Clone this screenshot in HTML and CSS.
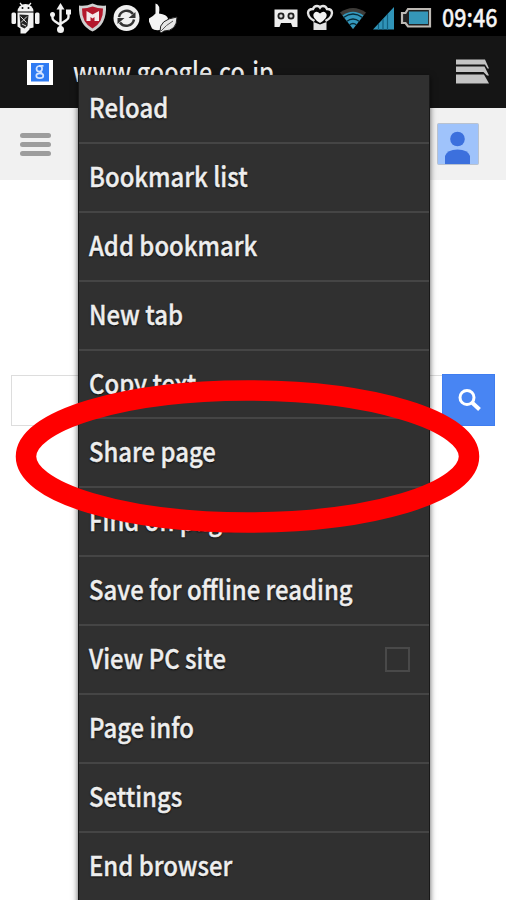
FILE: index.html
```
<!DOCTYPE html>
<html lang="en">
<head>
<meta charset="utf-8">
<title>Browser menu</title>
<link rel="stylesheet" href="styles.css">
</head>
<body>
<div class="phone">
  <header class="status">
    <svg class="status-icons" width="180" height="36" viewBox="0 0 180 36" aria-hidden="true">
      <!-- android -->
      <g fill="#f2f2f2">
        <path d="M17.500 11.500a8 7.500 0 0 1 16 0z"/>
        <path d="M20 3l2.500 3M31 3l-2.500 3" stroke="#f2f2f2" stroke-width="1.200"/>
        <rect x="11.500" y="12.500" width="4.500" height="11.500" rx="1.500"/>
        <rect x="35" y="12.500" width="4.500" height="11.500" rx="1.500"/>
        <path d="M17.500 12.500h16v15l-4 1v1l-4 4h-5v-5l-3-2z"/>
      </g>
      <circle cx="22.500" cy="8" r="1" fill="#111"/><circle cx="28.500" cy="8" r="1" fill="#111"/>
      <path d="M19.500 14.500l9 .5-1 11-3 2.500-4-2z" fill="#222"/>
      <path d="M20.500 16.500l6 6M27 16.500l-6 6M22 24l4 2" stroke="#ddd" stroke-width="1"/>
      <!-- usb -->
      <g fill="none" stroke="#f2f2f2" stroke-width="2.400">
        <path d="M60.500 8v22M52.500 15v3q0 2 2 3l6 4M68.500 13v4q0 2-2 3l-6 4"/>
      </g>
      <g fill="#f2f2f2"><path d="M60.500 3l4 6.500h-8z"/><circle cx="52.500" cy="14.500" r="2.500"/><rect x="66" y="9.500" width="5" height="5"/><circle cx="60.500" cy="29.500" r="3.500"/></g>
      <!-- shield -->
      <path d="M79 5.500Q86 6.500 92.500 3.500Q99 6.500 106 5.500Q107 25 92.500 31.500Q78 25 79 5.500z" fill="#cfcfcf"/>
      <path d="M82 8.500Q87 8.500 92.500 6.500Q98 8.500 103 8.500Q103.500 22.500 92.500 28.500Q81.500 22.500 82 8.500z" fill="#b4182c"/>
      <path d="M86.500 21v-10l6 3.500 6.500-3.500v10h-4.500v-4l-2 1.500-2-1.500v4z" fill="#f4e8ea"/>
      <!-- sync -->
      <circle cx="126.500" cy="18" r="13" fill="#f0f0f0"/>
      <g fill="none" stroke="#333" stroke-width="2.500"><path d="M119 17a7.800 7.800 0 0 1 14-3M134 19.500a7.800 7.800 0 0 1-14 3"/></g>
      <path d="M135.500 12v6h-7zM117.500 24v-6h7z" fill="#333"/>
      <!-- hand and leaf -->
      <path d="M155.500 3.500q5 1 3.500 10q8 1 9 5l-5 11q-8 2-11-1l-3-7v-3q4-2 6.500-5z" fill="#f4f4f4"/>
      <path d="M160 31.500q-1-12 17-14.500q0 14-13 14l-3 2z" fill="#e6e6e6" stroke="#222" stroke-width="1"/>
      <path d="M161 31q5-6 12-10" fill="none" stroke="#555" stroke-width="1"/>
    </svg>
    <svg class="status-icons" width="174" height="36" viewBox="268 0 174 36" aria-hidden="true">
      <!-- voicemail -->
      <path d="M274.500 9.500h23V27h-5l-1.500-4h-10l-1.500 4h-5z" fill="#eee"/>
      <g fill="#ddd" stroke="#222" stroke-width="1.800"><circle cx="281" cy="16" r="2.600"/><circle cx="291" cy="16" r="2.600"/></g>
      <!-- heart badge -->
      <path d="M314.500 21q-6-3-6.500-8q0-4 5-4 1-3 4-3 2 0 3 1.500 1-1.500 3-1.500 3 0 4 3 5 0 5 4-.5 5-6.500 8" fill="none" stroke="#e4e4e4" stroke-width="2.400"/>
      <path d="M320 23q-8-5-6.500-9q2.500-4 6.500-.5q4-3.500 6.500.5q1.500 4-6.500 9z" fill="#f2f2f2"/>
      <path d="M313.500 22l6.500 2.500 6.500-2.500v8h-13z" fill="#e2e2e2"/>
      <!-- wifi -->
      <path d="M353 29L340 12.500Q353 3.500 366 12.500z" fill="#3d3b38"/>
      <path d="M353 29L342.500 15.500Q353 8 363.500 15.500z" fill="#3498bd"/>
      <g fill="none" stroke="#082c38" stroke-width="1.300"><path d="M343.500 17.500q9.500-7 19 0M346.500 21.500q6.500-5 13 0M349.500 25q3.500-3 7 0"/></g>
      <!-- signal -->
      <path d="M373 29.500L394 7v22.500z" fill="#3094b8"/>
      <path d="M378.500 24v6M383 19v11M387.500 14v16" stroke="#126180" stroke-width="1.200"/>
      <!-- battery -->
      <path d="M408 9h22v17.500h-22l-2.500-3.500h-3.500v-10h3.500z" fill="#222" stroke="#bdb9b4" stroke-width="2.200"/>
      <rect x="409" y="11.500" width="19" height="12.500" fill="#3596b8"/>
    </svg>
    <span class="clock"><span>09:46</span></span>
  </header>

  <div class="address">
    <svg class="favicon" width="26" height="25" viewBox="0 0 26 25" aria-hidden="true">
      <rect width="26" height="25" fill="#fff"/><rect x="4" y="3" width="18" height="18.500" fill="#2e7bf3"/>
      <g fill="none" stroke="#d3e4ff" stroke-width="1.700"><ellipse cx="12.300" cy="8.800" rx="2.800" ry="2.800"/><path d="M12 5.800h4.500M12.500 11.500l2.500 2"/><ellipse cx="12.800" cy="15.800" rx="3.500" ry="2.400"/></g>
    </svg>
    <span class="url"><span>www.google.co.jp</span></span>
    <svg width="36" height="28" viewBox="0 0 36 28" aria-hidden="true">
      <g fill="#c4c4c4"><path d="M1 1.500h29l4 9h-1.500l-2.500-4H1z"/><path d="M1 8.500h28.500l4.500 9h-2l-3.500-3.500H1z"/><path d="M1 16.500h28l5 9H1z"/></g>
    </svg>
  </div>

  <div class="toolbar">
    <div class="burger"><i></i><i></i><i></i></div>
    <svg class="avatar" width="42" height="42" viewBox="0 0 42 42" aria-hidden="true">
      <rect x=".5" y=".5" width="41" height="41" rx="1" fill="#9fc3fb" stroke="#b9c2cf"/>
      <circle cx="20.500" cy="16" r="7.300" fill="#3c70dd"/>
      <path d="M8 41v-8q2-6.500 12.500-6.500T33 33v8z" fill="#3c70dd"/>
    </svg>
  </div>

  <main class="content">
    <div class="search">
      <div class="field"></div>
      <div class="go">
        <svg width="53" height="51" viewBox="0 0 53 51" aria-hidden="true"><circle cx="24" cy="22.500" r="7" fill="none" stroke="#fff" stroke-width="3"/><path d="M29 27.500l7.500 7" stroke="#fff" stroke-width="4"/></svg>
      </div>
    </div>
  </main>

  <nav class="menu">
    <div class="item"><span>Reload</span></div>
    <div class="item"><span>Bookmark list</span></div>
    <div class="item"><span>Add bookmark</span></div>
    <div class="item"><span>New tab</span></div>
    <div class="item"><span>Copy text</span></div>
    <div class="item"><span>Share page</span></div>
    <div class="item"><span>Find on page</span></div>
    <div class="item"><span>Save for offline reading</span></div>
    <div class="item"><span>View PC site</span><b class="check"></b></div>
    <div class="item"><span>Page info</span></div>
    <div class="item"><span>Settings</span></div>
    <div class="item"><span>End browser</span></div>
  </nav>

  <svg class="highlight" width="466" height="156" viewBox="0 0 466 156" aria-hidden="true">
    <ellipse cx="232.500" cy="77.500" rx="221.500" ry="66" fill="none" stroke="#f00" stroke-width="20.500"/>
  </svg>
</div>
</body>
</html>
```
FILE: styles.css
```
* { box-sizing: border-box; }
body { margin: 0; font-family: "Noto Sans CJK JP", "Noto Sans", sans-serif; }
svg { display: block; flex: none; }
.phone { position: relative; width: 506px; height: 900px; overflow: hidden; background: #fff; display: flex; flex-direction: column; }
.status { flex: none; height: 36px; background: #000; display: flex; align-items: center; justify-content: space-between; }
.status-icons:nth-child(2) { margin-left: 88px; }
.clock { width: 64px; height: 36px; font-size: 25px; line-height: 33px; font-weight: 500; color: #f4f4f4; white-space: nowrap; -webkit-text-stroke: .3px #f4f4f4; }
.clock span { display: inline-block; transform: scaleX(.86); transform-origin: left; }
.address { flex: none; height: 72px; background: #151515; display: flex; align-items: center; padding: 0 15px 0 27px; }
.url { flex: 1; margin-left: 20px; padding-bottom: 3px; font-size: 27px; line-height: 36px; font-weight: 500; color: #eee; }
.url span { display: inline-block; white-space: nowrap; transform: scaleX(.866); transform-origin: left; }
.toolbar { flex: none; height: 72px; background: #f1f1f1; display: flex; align-items: center; justify-content: space-between; padding: 0 27px 0 20px; }
.burger { display: flex; flex-direction: column; gap: 4px; }
.burger i { width: 31px; height: 5px; border-radius: 2.500px; background: #9d9d9d; }
.content { flex: 1; padding: 194px 11px 0 11px; }
.search { display: flex; height: 52px; }
.field { flex: 1; border: 1px solid #ddd; border-right: 0; margin-top: 1px; }
.go { width: 53px; height: 52px; background: #4885f3; border: 1px solid #3f7df0; overflow: hidden; }
.menu { position: absolute; left: 78px; top: 75px; width: 352px; height: 830px; background: #303030; border-left: 1px solid #181818; border-right: 1px solid #181818; box-shadow: 0 2px 6px rgba(0,0,0,.65); display: flex; flex-direction: column; }
.item { flex: none; height: 68.900px; border-bottom: 2px solid #454545; display: flex; align-items: center; justify-content: space-between; padding: 0 19px 3px 10px; font-size: 27px; line-height: 40px; font-weight: 500; color: #eee; text-shadow: 0 1px 2px #000; }
.item:last-child { border-bottom-color: transparent; }
.item span { white-space: nowrap; transform: scaleX(.885); transform-origin: left; -webkit-text-stroke: .4px #eee; }
.check { width: 25px; height: 25px; margin-top: 3px; border: 2px solid #494949; }
.highlight { position: absolute; left: 15px; top: 379px; }
```
